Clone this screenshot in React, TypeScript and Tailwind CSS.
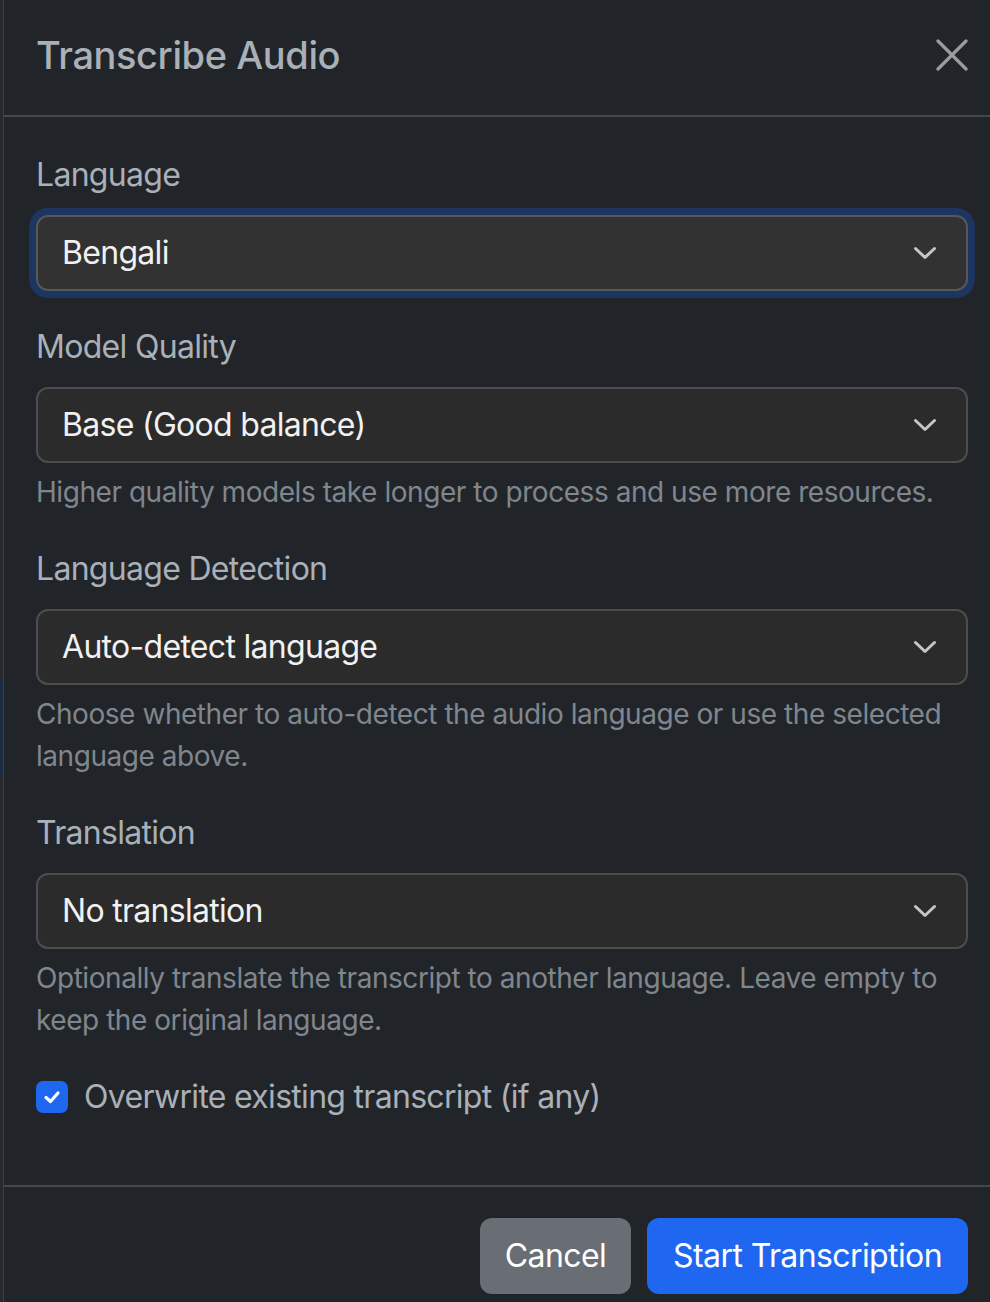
const FONT = "font-['Inter','Liberation_Sans',sans-serif]";

function Chevron() {
  return (
    <svg width="22" height="14" viewBox="0 0 22 14" fill="none" className="shrink-0">
      <path d="M1.5 2.5 L11 11.5 L20.5 2.5" stroke="#c3c7cb" strokeWidth="3" strokeLinecap="round" strokeLinejoin="round" />
    </svg>
  );
}

function Select({ value, focused }: { value: string; focused?: boolean }) {
  return (
    <div
      className={
        focused
          ? "flex items-center justify-between h-[76px] rounded-[12px] border-2 border-[#555759] bg-[#323232] pl-[24px] pr-[30px] ring-[7px] ring-[#1d3561]"
          : "flex items-center justify-between h-[76px] rounded-[12px] border-2 border-[#4b4d4f] bg-[#2b2b2b] pl-[24px] pr-[30px]"
      }
    >
      <span className="text-[32px] leading-[48px] tracking-[-0.7px] text-[#f1f1f1]">{value}</span>
      <Chevron />
    </div>
  );
}

function Field({ label, value, help, focused }: { label: string; value: string; help?: string; focused?: boolean }) {
  return (
    <div className="mb-[32px]">
      <div className="text-[32px] leading-[48px] tracking-[-0.7px] text-[#aab0b7] mb-[16px]">{label}</div>
      <Select value={value} focused={focused} />
      {help && <div className="mt-[8px] text-[28px] leading-[42px] tracking-[-0.45px] text-[#80868d]">{help}</div>}
    </div>
  );
}

export default function App() {
  return (
    <div className={`w-[990px] h-[1302px] overflow-hidden flex bg-[#1e2124] ${FONT}`}>
      {/* page behind the modal */}
      <div className="w-[3px] shrink-0 flex flex-col bg-[#27292c]">
        <div className="h-[680px]" />
        <div className="h-[96px] bg-[#1c2a44]" />
      </div>

      <div className="w-[997px] shrink-0 border-l border-[#3c3e41] bg-[#212529] flex flex-col">
        <div className="h-[117px] shrink-0 flex items-center justify-between px-[32px] pb-[6px] border-b-2 border-[#44484c]">
          <h5 className="text-[38px] leading-[60px] tracking-[-0.4px] font-medium text-[#aab0b7]">Transcribe Audio</h5>
          <svg width="32" height="32" viewBox="0 0 32 32" fill="none">
            <path d="M2 2 L30 30 M30 2 L2 30" stroke="#9a9b9c" strokeWidth="3.2" strokeLinecap="round" />
          </svg>
        </div>

        <div className="px-[32px] pt-[34px] pb-[32px]">
          <Field label="Language" value="Bengali" focused />
          <Field
            label="Model Quality"
            value="Base (Good balance)"
            help="Higher quality models take longer to process and use more resources."
          />
          <Field
            label="Language Detection"
            value="Auto-detect language"
            help="Choose whether to auto-detect the audio language or use the selected language above."
          />
          <Field
            label="Translation"
            value="No translation"
            help="Optionally translate the transcript to another language. Leave empty to keep the original language."
          />
          <div className="flex items-center h-[48px] mb-[32px]">
            <div className="w-[32px] h-[32px] rounded-[7px] bg-[#1f66f0] flex items-center justify-center">
              <svg width="22" height="22" viewBox="0 0 22 22" fill="none">
                <path d="M5 11.5 L9.5 15.5 L17 7" stroke="#ffffff" strokeWidth="3.2" strokeLinecap="round" strokeLinejoin="round" />
              </svg>
            </div>
            <span className="ml-[16px] text-[32px] leading-[48px] tracking-[-0.7px] text-[#aab0b7]">Overwrite existing transcript (if any)</span>
          </div>
        </div>

        <div className="border-t-2 border-[#44484c] flex justify-end gap-[16px] pt-[31px] pr-[32px]">
          <button className="h-[76px] px-[25px] rounded-[12px] bg-[#686e74] text-[32px] tracking-[-0.6px] text-white">Cancel</button>
          <button className="h-[76px] px-[26px] rounded-[12px] bg-[#1f66f0] text-[32px] tracking-[-0.6px] text-white">Start Transcription</button>
        </div>
      </div>
    </div>
  );
}
